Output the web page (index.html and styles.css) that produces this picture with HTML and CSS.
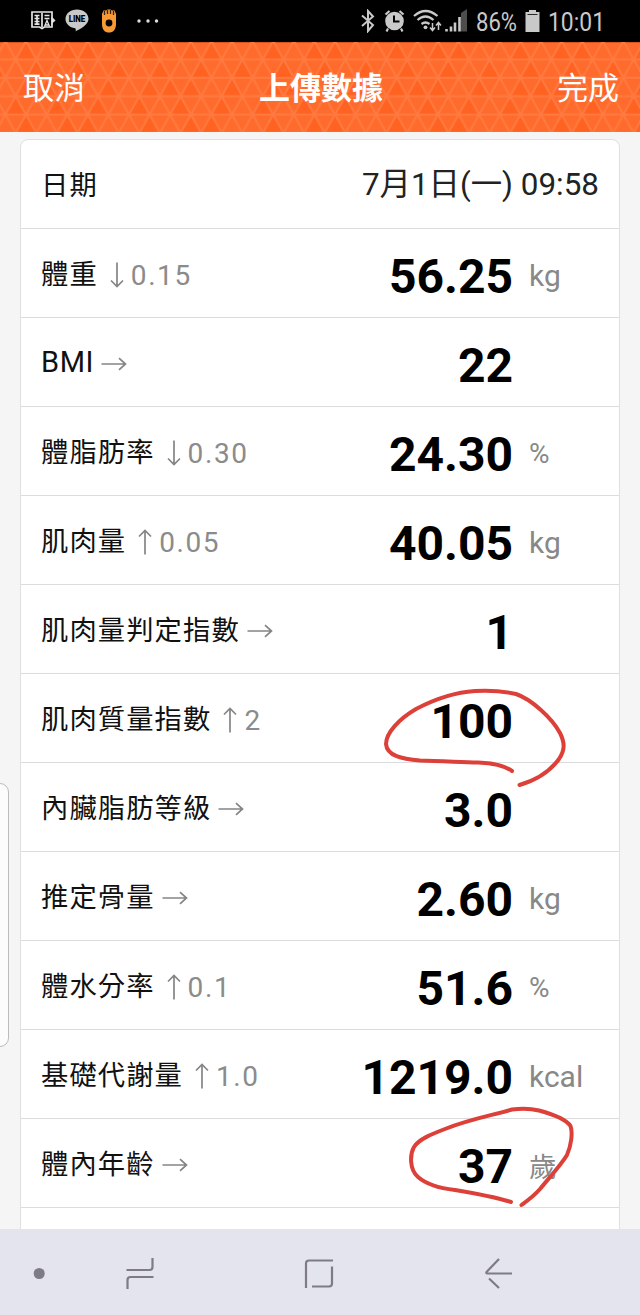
FILE: index.html
```
<!DOCTYPE html>
<html lang="zh-Hant">
<head>
<meta charset="utf-8">
<title>上傳數據</title>
<link rel="stylesheet" href="styles.css">
</head>
<body>
<svg class="defs" width="0" height="0">
  <symbol id="right" viewBox="0 0 26 14"><path d="M.5 7H24.5M18 1.2 24.5 7 18 12.8"/></symbol>
  <symbol id="down" viewBox="0 0 14 26"><path d="M7 .5V24.5M1 18.5 7 24.5 13 18.5"/></symbol>
  <symbol id="up" viewBox="0 0 14 26"><path d="M7 25.5V1.5M1 7.5 7 1.5 13 7.5"/></symbol>
</svg>
<div class="screen">
  <div class="status">
    <svg class="book" width="25" height="20" viewBox="0 0 25 20"><path d="M1 1H21V16H13.500L11 17.500 8.500 16H1ZM11 2V16M3.500 4.500H8.500M3.500 7.500H8.500M3.500 10.500H8.500M3.500 13.200H8.500M13.500 4.500H18.500M13.500 7.500H18.500M6 4V13" fill="none" stroke="#e6e6e6" stroke-width="1.700"/><path d="M21 14V6.500L24 9.500 21 12" fill="#e6e6e6" stroke="#e6e6e6" stroke-width="1"/><path d="M13.500 15.500 16 9.500 18.500 15.500M14 14H18" fill="none" stroke="#e6e6e6" stroke-width="1.300"/></svg>
    <svg class="line-app" width="24" height="23" viewBox="0 0 24 23"><path d="M12 .5C5.500.5.5 4.600.5 10c0 4.700 4 8.500 9.500 9.200 1 .2.700 1.600.7 3 4.500-2 12.800-6.500 12.800-12.200C23.500 4.600 18.500.5 12 .5Z" fill="#c9c9c9"/><text x="3.700" y="13" textLength="16.600" lengthAdjust="spacingAndGlyphs">LINE</text></svg>
    <svg class="band" width="16" height="24" viewBox="0 0 16 24"><path d="M1 5 2.500 1.500H5L6.500.5H9.500L11 1.500H13.500L15 5V15C15 21 12 23.500 8 23.500S1 21 1 15Z" fill="#f79a35"/><path d="M3.500 2V6M6.500 1V5M9.500 1V5M12.500 2V6" stroke="#3b220d" stroke-width="1.300"/><circle cx="8" cy="14" r="3.400" fill="#000"/></svg>
    <svg class="more" width="22" height="4" viewBox="0 0 22 4" fill="#ddd"><circle cx="2" cy="2" r="1.700"/><circle cx="11" cy="2" r="1.700"/><circle cx="19.500" cy="2" r="1.700"/></svg>
    <svg class="indicators" width="108" height="24" viewBox="0 0 108 24" fill="none" stroke="#c9c9c9">
      <path d="M2 6.500 13 16 8 22V2L13 7.500 2 17" stroke-width="2"/>
      <circle cx="34.500" cy="12" r="9.300" fill="#c9c9c9" stroke="none"/><path d="M25.500 5.500 29.500 2M43.500 5.500 39.500 2M28 19.500 26.500 22.500M41 19.500 42.500 22.500" stroke-width="2.200"/><path d="M34 6.500V12.500H39.500" stroke="#000" stroke-width="2"/>
      <path d="M54 7Q65.500-3 77.500 7M57.500 11Q65.500 4 73.500 11M61.500 15Q65.500 12 69.500 15" stroke-width="2.200"/><circle cx="65.500" cy="18.300" r="1.900" fill="#c9c9c9" stroke="none"/><path d="M72.500 14V21M70 18.500 72.500 21.500 75 18.500M78.500 21V13.500M76 16.500 78.500 13.500 81 16.500" stroke-width="1.500"/>
      <path d="M101 4 107 0V22.500H101Z" fill="#4d4d4d" stroke="none"/><path d="M86.500 22.500V20M91 22.500V17.500M95 22.500V13.500M99.500 22.500V8" stroke-width="2.600"/>
    </svg>
    <svg class="pct" width="44" height="32" viewBox="0 0 44 32"><text x="1" y="21.500" textLength="41" lengthAdjust="spacingAndGlyphs">86%</text></svg>
    <svg class="battery" width="15" height="22" viewBox="0 0 15 22" fill="#c9c9c9"><path d="M4 0H11V2H14.500V22H.5V2H4Z"/><path d="M2.500 4.500H12.500" stroke="#000" stroke-width=".8"/></svg>
    <svg class="time" width="60" height="32" viewBox="0 0 60 32"><text x="1" y="21.500" textLength="57" lengthAdjust="spacingAndGlyphs">10:01</text></svg>
  </div>
  <header class="bar">
    <svg class="mesh" width="640" height="90"><defs><pattern id="tri" width="20.600" height="36.800" patternUnits="userSpaceOnUse" patternTransform="translate(5.400 35.800)"><path d="M0 0 20.600 36.800M20.600 0 0 36.800M0 0H20.600M0 18.400H20.600M0 36.800H20.600" stroke="#ff7a40" stroke-width="2"/></pattern>
    <pattern id="shade" width="123.600" height="73.600" patternUnits="userSpaceOnUse" patternTransform="translate(5.400 35.800)"><path d="M20.600 0 30.900 18.400H10.300ZM41.200 0 51.500 18.400H30.900ZM61.800 0 72.100 18.400H51.500ZM103 0 113.300 18.400H92.700ZM10.300 18.400 20.600 36.800H0ZM51.500 18.400 61.800 36.800H41.200ZM92.700 18.400 103 36.800H82.400ZM20.600 36.800 30.900 55.200H10.300ZM61.800 36.800 72.100 55.200H51.500ZM82.400 36.800 92.700 55.200H72.100ZM30.900 55.200 41.200 73.600H20.600ZM72.100 55.200 82.400 73.600H61.800ZM113.300 55.200 123.600 73.600H103Z" fill="#ff6221"/></pattern></defs><rect width="640" height="90" fill="url(#shade)"/><rect width="640" height="90" fill="url(#tri)"/></svg>
    <span class="action">取消</span><h1>上傳數據</h1><span class="action">完成</span>
  </header>
  <main class="content">
    <section class="card">
      <div class="row"><span class="label">日期</span><span class="date">7月1日(一) 09:58</span></div>
      <div class="row"><span class="label">體重</span><svg class="v"><use href="#down"/></svg><span class="change">0.15</span><b>56.25</b><span class="unit">kg</span></div>
      <div class="row"><span class="label latin">BMI</span><svg class="h"><use href="#right"/></svg><b>22</b><span class="unit"></span></div>
      <div class="row"><span class="label">體脂肪率</span><svg class="v"><use href="#down"/></svg><span class="change">0.30</span><b>24.30</b><span class="unit percent">%</span></div>
      <div class="row"><span class="label">肌肉量</span><svg class="v"><use href="#up"/></svg><span class="change">0.05</span><b>40.05</b><span class="unit">kg</span></div>
      <div class="row"><span class="label">肌肉量判定指數</span><svg class="h"><use href="#right"/></svg><b>1</b><span class="unit"></span></div>
      <div class="row"><span class="label">肌肉質量指數</span><svg class="v"><use href="#up"/></svg><span class="change">2</span><b>100</b><span class="unit"></span></div>
      <div class="row"><span class="label">內臟脂肪等級</span><svg class="h"><use href="#right"/></svg><b>3.0</b><span class="unit"></span></div>
      <div class="row"><span class="label">推定骨量</span><svg class="h"><use href="#right"/></svg><b>2.60</b><span class="unit">kg</span></div>
      <div class="row"><span class="label">體水分率</span><svg class="v"><use href="#up"/></svg><span class="change">0.1</span><b>51.6</b><span class="unit percent">%</span></div>
      <div class="row"><span class="label">基礎代謝量</span><svg class="v"><use href="#up"/></svg><span class="change">1.0</span><b>1219.0</b><span class="unit">kcal</span></div>
      <div class="row"><span class="label">體內年齡</span><svg class="h"><use href="#right"/></svg><b>37</b><span class="unit age">歲</span></div>
    </section>
    <div class="handle"></div>
  </main>
  <nav class="nav">
    <svg width="640" height="86" viewBox="0 0 640 86" fill="none" stroke="#7d7b85" stroke-width="2.200">
      <circle cx="39.200" cy="44.500" r="5.500" fill="#7d7b85" stroke="none"/>
      <path d="M126.500 41H149.500Q152.500 41 152.500 38V29M153.500 48H130.500Q127.500 48 127.500 51V60"/>
      <path d="M333 31.500H309Q306 31.500 306 34.500V59M332 37.500V54.500Q332 57.500 329 57.500H312"/>
      <path d="M512 44.500H487Q485.500 44 487 42.500L499 30M489 49.500 499 59"/>
    </svg>
  </nav>
  <svg class="ink" width="640" height="1315" viewBox="0 0 640 1315">
    <path d="M512 771C505 766 493 763 478 762.500C460 762 441 761 420 760.500C402 759 387 756 386 744C386 733 399 719 416 709C437 698 459 692 475 691C490 690 507 692 516 694C531 699 552 718 560 733C565 743 565 750 559 759C551 770 540 779 519.500 785"/>
    <path d="M511 1202C495 1197 473 1193 455 1190C438 1188 426 1184 418 1177C409 1169 410 1154 414 1147C419 1139 432 1134 445 1129C470 1119 494 1115 512 1109.500Q527 1107.500 539 1110.500C552 1114 566 1119 570.500 1126C573 1133 571 1146 567 1155C561 1165 549 1178 540 1189C534 1196 527 1201 521.500 1205"/>
  </svg>
</div>
</body>
</html>
```
FILE: styles.css
```
* { box-sizing: border-box; }
body { margin: 0; font-family: Roboto, "Noto Sans CJK TC", sans-serif; background: #f5f5f5; }
.defs { position: absolute; }
.screen { position: relative; width: 640px; height: 1315px; overflow: hidden; display: flex; flex-direction: column; }
svg { display: block; flex: none; }

.status { height: 42px; background: #000; display: flex; align-items: flex-start; padding: 9px 0 0 31px; }
.status .book { margin-top: 2px; }
.status .line-app { margin-left: 9px; }
.status .band { margin-left: 12px; }
.status .more { margin: 10px 0 0 20px; }
.status .indicators { margin-left: 201px; }
.status .pct { margin-left: 7px; }
.status .battery { margin: 1px 0 0 6px; }
.status .time { margin-left: 7px; }
.status text { font-size: 25px; fill: #c9c9c9; }
.status .line-app text { font: 900 8.5px Roboto, sans-serif; fill: #000; }

.bar { position: relative; height: 90px; flex: none; background: #ff6b2c; color: #fff; display: flex; justify-content: space-between; align-items: center; padding: 2px 21px 0 23px; border-top: 1px solid #d9541f; }
.mesh { position: absolute; left: 0; top: -1px; }
.bar .action, .bar h1 { position: relative; margin: 0; font-size: 31px; line-height: 87px; font-weight: 400; }
.bar h1 { font-weight: 700; }

.content { position: relative; flex: none; height: 1097px; padding: 7px 20px 0; overflow: hidden; }
.card { height: 1120px; background: #fff; border: 1px solid #e0e0e2; border-radius: 8px; }
.row { display: flex; height: 89px; border-bottom: 1px solid #dcdcde; padding-left: 20px; line-height: 89px; white-space: nowrap; color: #111; }
.label { font-size: 27.3px; letter-spacing: 1.1px; padding-top: 2px; }
.latin { font-size: 29px; letter-spacing: .6px; padding-top: 0; }
.row svg { fill: none; stroke: #858585; stroke-width: 1.7; }
.row .h { width: 26px; height: 14px; margin: 39px 0 0 7px; }
.row .v { width: 14px; height: 26px; margin: 33px 0 0 12px; }
.change { font-size: 28px; letter-spacing: 1.6px; color: #8b8b8b; margin-left: 7px; padding-top: 2px; }
.row b { margin-left: auto; font-size: 48px; font-weight: 700; color: #000; padding-top: 3px; }
.unit { width: 90px; margin-left: 16px; font-size: 30px; color: #888; padding-top: 2px; }
.percent { font-size: 28px; transform-origin: left; }
.age { font-size: 27.5px; padding-top: 4px; }
.date { margin-left: auto; margin-right: 20px; font-size: 31.4px; color: #222; }
.handle { position: absolute; left: -20px; top: 651px; width: 29px; height: 264px; border: 1px solid #bcbcbc; border-radius: 9px; background: #fcfcfc; }

.nav { height: 86px; flex: none; background: #e4e4ee; }
.ink { position: absolute; left: 0; top: 0; fill: none; stroke: #dc4038; stroke-width: 4; stroke-linecap: round; stroke-linejoin: round; pointer-events: none; }
```
